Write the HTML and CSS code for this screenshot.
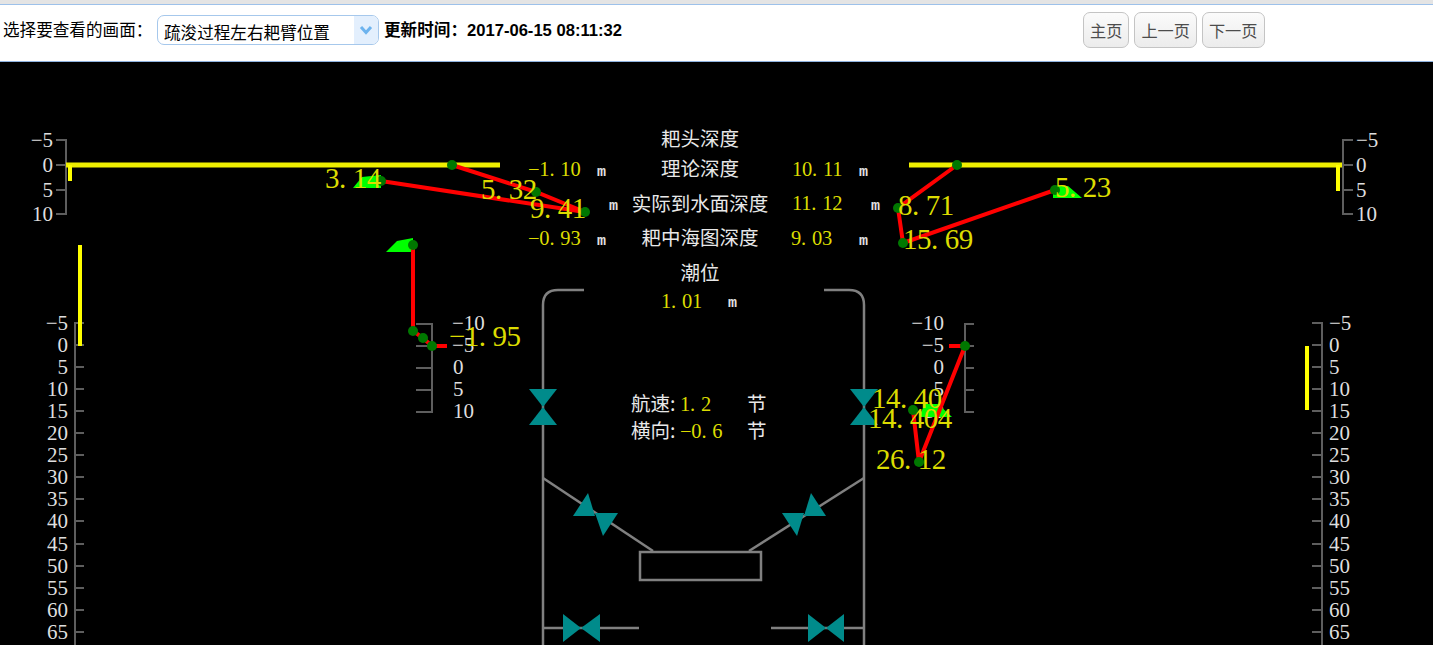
FILE: index.html
```html
<!DOCTYPE html>
<html lang="zh-CN">
<head>
    <meta charset="UTF-8">
    <title>疏浚过程左右耙臂位置</title>
    <link rel="stylesheet" href="styles.css">
</head>
<body>

<div class="topline"></div>

<div class="toolbar">
    <label class="pick-label" for="screen">选择要查看的画面<span class="colon">：</span></label>
    <div class="select-wrap">
        <select id="screen" class="screen-select">
            <option>疏浚过程左右耙臂位置</option>
        </select>
        <span class="select-arrow">
            <svg width="14" height="10" viewBox="0 0 14 10"><path d="M2 2 L7 7.5 L12 2" fill="none" stroke="#6db3ee" stroke-width="3"/></svg>
        </span>
    </div>
    <span class="update-time">更新时间<span class="colon">：</span>2017-06-15 08:11:32</span>
    <div class="pager">
        <button class="pager-btn" type="button">主页</button>
        <button class="pager-btn" type="button">上一页</button>
        <button class="pager-btn" type="button">下一页</button>
    </div>
</div>

<!-- viewBox keeps the screenshot's y values, canvas starts at y=62 -->
<svg class="canvas" viewBox="0 62 1433 583" width="1433" height="583">

    <!-- hull -->
    <g class="hull">
        <path d="M584 290 H558 Q543 290 543 305 V645"/>
        <path d="M824 290 H849 Q864 290 864 305 V645"/>
        <path d="M543 478 L653 551"/>
        <path d="M864 478 L749 551"/>
        <rect x="640" y="552" width="121" height="28"/>
        <path d="M543 628 H639"/>
        <path d="M771 628 H864"/>
    </g>

    <!-- valves -->
    <g class="valve">
        <polygon points="529,389 557,389 543,407"/>
        <polygon points="529,425 557,425 543,407"/>
        <polygon points="850,389 878,389 864,407"/>
        <polygon points="850,425 878,425 864,407"/>
        <polygon points="588,493 573,516 595,516"/>
        <polygon points="595,513 618,513 603,536"/>
        <polygon points="811,493 804,516 826,516"/>
        <polygon points="782,513 804,513 797,536"/>
        <polygon points="563,614 563,642 581,628"/>
        <polygon points="600,614 600,642 581,628"/>
        <polygon points="808,614 808,642 826,628"/>
        <polygon points="844,614 844,642 826,628"/>
    </g>

    <!-- scales -->
    <g class="scale">
        <path d="M56 140 H66 V214 H56 M56 165 H66 M56 190 H66"/>
        <path d="M1353 140 H1343 V214 H1353 M1353 165 H1343 M1353 190 H1343"/>
        <path d="M416 324 H432 V412 H416 M416 346 H432 M416 368 H432 M416 390 H432"/>
        <path d="M974 324 H965 V412 H974 M974 346 H965 M974 368 H965 M974 390 H965"/>
        <path d="M84 323 H75 V645 M84 345 H75 M84 367 H75 M84 389 H75 M84 411 H75 M84 433 H75 M84 455 H75 M84 477 H75 M84 499 H75 M84 521 H75 M84 544 H75 M84 566 H75 M84 588 H75 M84 610 H75 M84 632 H75"/>
        <path d="M1312 323 H1322 V645 M1312 345 H1322 M1312 367 H1322 M1312 389 H1322 M1312 411 H1322 M1312 433 H1322 M1312 455 H1322 M1312 477 H1322 M1312 499 H1322 M1312 521 H1322 M1312 544 H1322 M1312 566 H1322 M1312 588 H1322 M1312 610 H1322 M1312 632 H1322"/>
    </g>

    <g class="tick-label end">
        <text x="53" y="147">−5</text>
        <text x="53" y="172">0</text>
        <text x="53" y="197">5</text>
        <text x="53" y="221">10</text>

        <text x="68" y="330">−5</text>
        <text x="68" y="352">0</text>
        <text x="68" y="374">5</text>
        <text x="68" y="396">10</text>
        <text x="68" y="418">15</text>
        <text x="68" y="440">20</text>
        <text x="68" y="462">25</text>
        <text x="68" y="484">30</text>
        <text x="68" y="506">35</text>
        <text x="68" y="528">40</text>
        <text x="68" y="551">45</text>
        <text x="68" y="573">50</text>
        <text x="68" y="595">55</text>
        <text x="68" y="617">60</text>
        <text x="68" y="639">65</text>

        <text x="944" y="330">−10</text>
        <text x="944" y="352">−5</text>
        <text x="944" y="374">0</text>
        <text x="944" y="396">5</text>
        <text x="944" y="418">10</text>
    </g>
    <g class="tick-label">
        <text x="1356" y="147">−5</text>
        <text x="1356" y="172">0</text>
        <text x="1356" y="197">5</text>
        <text x="1356" y="221">10</text>

        <text x="452" y="330">−10</text>
        <text x="452" y="352">−5</text>
        <text x="453" y="374">0</text>
        <text x="453" y="396">5</text>
        <text x="453" y="418">10</text>

        <text x="1329" y="330">−5</text>
        <text x="1329" y="352">0</text>
        <text x="1329" y="374">5</text>
        <text x="1329" y="396">10</text>
        <text x="1329" y="418">15</text>
        <text x="1329" y="440">20</text>
        <text x="1329" y="462">25</text>
        <text x="1329" y="484">30</text>
        <text x="1329" y="506">35</text>
        <text x="1329" y="528">40</text>
        <text x="1329" y="551">45</text>
        <text x="1329" y="573">50</text>
        <text x="1329" y="595">55</text>
        <text x="1329" y="617">60</text>
        <text x="1329" y="639">65</text>
    </g>

    <!-- water line and draught bars -->
    <g class="level">
        <path class="water" d="M66 165 H500"/>
        <path d="M70 165 V181"/>
        <path class="water" d="M909 165 H1342"/>
        <path d="M1338 165 V191"/>
        <path d="M80 245 V346"/>
        <path d="M1307 346 V410"/>
    </g>

    <!-- drag heads -->
    <g class="head">
        <polygon points="353,188 362,177 381,175 381,188"/>
        <polygon points="386,252 397,241 413,238 413,252"/>
        <polygon points="1053,198 1053,186 1068,186 1082,198"/>
        <polygon points="920,417 920,414 925,404 938,404 952,417"/>
    </g>

    <!-- drag arms -->
    <g class="arm">
        <polyline points="452,165 536,192 585,212 381,181"/>
        <polyline points="413,245 413,331 423,338 432,346 447,346"/>
        <polyline points="957,165 898,208 903,243 1055,190"/>
        <polyline points="949,346 965,346 919,462 913,410"/>
    </g>
    <g class="joint">
        <circle cx="452" cy="165" r="5"/>
        <circle cx="536" cy="192" r="5"/>
        <circle cx="585" cy="212" r="5"/>
        <circle cx="381" cy="181" r="5"/>
        <circle cx="413" cy="245" r="5"/>
        <circle cx="413" cy="331" r="5"/>
        <circle cx="423" cy="338" r="5"/>
        <circle cx="432" cy="346" r="5"/>
        <circle cx="957" cy="165" r="5"/>
        <circle cx="898" cy="208" r="5"/>
        <circle cx="903" cy="243" r="5"/>
        <circle cx="1055" cy="190" r="5"/>
        <circle cx="965" cy="346" r="5"/>
        <circle cx="919" cy="462" r="5"/>
        <circle cx="913" cy="410" r="5"/>
    </g>

    <!-- depth table -->
    <g class="cn-label middle">
        <text x="700" y="146">耙头深度</text>
        <text x="700" y="176">理论深度</text>
        <text x="700" y="211">实际到水面深度</text>
        <text x="700" y="245">耙中海图深度</text>
        <text x="700" y="280">潮位</text>
    </g>
    <g class="small-value">
        <text x="528" y="176">−1.<tspan dx="6">10</tspan></text>
        <text x="528" y="245">−0.<tspan dx="6">93</tspan></text>
        <text x="792" y="176">10.<tspan dx="6">11</tspan></text>
        <text x="792" y="210">11.<tspan dx="6">12</tspan></text>
        <text x="791" y="245">9.<tspan dx="6">03</tspan></text>
        <text x="661" y="308">1.<tspan dx="6">01</tspan></text>
    </g>
    <g class="unit">
        <text x="597" y="176">m</text>
        <text x="609" y="210">m</text>
        <text x="597" y="245">m</text>
        <text x="859" y="176">m</text>
        <text x="871" y="210">m</text>
        <text x="859" y="245">m</text>
        <text x="728" y="307">m</text>
    </g>

    <!-- speed -->
    <g class="cn-label">
        <text x="631" y="411">航速:</text>
        <text x="631" y="438">横向:</text>
        <text x="747" y="411">节</text>
        <text x="747" y="438">节</text>
    </g>
    <g class="small-value">
        <text x="680" y="411">1.<tspan dx="6">2</tspan></text>
        <text x="680" y="438">−0.<tspan dx="6">6</tspan></text>
    </g>

    <!-- arm readings -->
    <g class="big-value">
        <text x="325" y="188">3.<tspan dx="7">14</tspan></text>
        <text x="481" y="199">5.<tspan dx="7">32</tspan></text>
        <text x="530" y="218">9.<tspan dx="7">41</tspan></text>
        <text x="449" y="346">−1.<tspan dx="7">95</tspan></text>
        <text x="898" y="215">8.<tspan dx="7">71</tspan></text>
        <text x="903" y="249">15.<tspan dx="7">69</tspan></text>
        <text x="1055" y="197">5.<tspan dx="7">23</tspan></text>
        <text x="872" y="408">14.<tspan dx="7">40</tspan></text>
        <text x="868" y="428">14.<tspan dx="7">404</tspan></text>
        <text x="876" y="469">26.<tspan dx="7">12</tspan></text>
    </g>
</svg>

</body>
</html>
```

FILE: styles.css
```css
html, body {
    margin: 0;
    padding: 0;
    height: 100%;
    overflow: hidden;
    background: #000;
    font-family: "Liberation Sans", "Noto Sans CJK SC", sans-serif;
}

.topline {
    height: 4px;
    background: #e4e4e4;
    border-bottom: 1px solid #9dc1ea;
}

.toolbar {
    display: flex;
    align-items: flex-start;
    height: 56px;
    background: #fff;
    border-bottom: 1px solid #8fb3e0;
    color: #000;
    font-size: 16.6px;
}

/* centred full-width colon, the SC face sets it in the corner */
.colon {
    font-family: "Noto Sans CJK TC", sans-serif;
}

.pick-label {
    margin: 14px 0 0 3px;
    width: 154px;
    white-space: nowrap;
    line-height: 20px;
}

.select-wrap {
    position: relative;
    margin-top: 10px;
    width: 222px;
    height: 30px;
}

.screen-select {
    appearance: none;
    width: 100%;
    height: 100%;
    padding: 7px 0 0 6px;
    border: 1px solid #a6c8ec;
    border-radius: 7px;
    background: #fff;
    color: #000;
    font: 16.6px "Liberation Sans", "Noto Sans CJK SC", sans-serif;
}

.select-arrow {
    position: absolute;
    top: 1px;
    right: 1px;
    bottom: 1px;
    width: 24px;
    display: flex;
    align-items: center;
    justify-content: center;
    background: #e3effd;
    border-radius: 0 6px 6px 0;
}

.update-time {
    margin: 14px 0 0 5px;
    width: 238px;
    font-weight: bold;
    white-space: nowrap;
    line-height: 20px;
}

.pager {
    display: flex;
    gap: 5px;
    margin: 7px 0 0 461px;
}

.pager-btn {
    height: 36px;
    padding: 0 6px;
    border: 1px solid #c4c4c4;
    border-radius: 7px;
    background: linear-gradient(#fbfbfb, #ececec);
    color: #4c4c4c;
    font: 16.2px "Liberation Sans", "Noto Sans CJK SC", sans-serif;
}

.canvas {
    display: block;
    background: #000;
}

.hull path, .hull rect {
    fill: none;
    stroke: #808080;
    stroke-width: 2.5;
}

.valve polygon {
    fill: #008b8b;
}

.scale path {
    fill: none;
    stroke: #5e5e5e;
    stroke-width: 2;
}

.tick-label text {
    fill: #dedede;
    font: 21px "Liberation Serif", serif;
}

.end text {
    text-anchor: end;
}

.level path {
    fill: none;
    stroke: #ffff00;
    stroke-width: 4;
}

.level .water {
    stroke: #eeee00;
    stroke-width: 5;
}

.head polygon {
    fill: #00ff00;
}

.arm polyline {
    fill: none;
    stroke: #ff0000;
    stroke-width: 4;
}

.joint circle {
    fill: #007800;
}

.cn-label text {
    fill: #e8e8e8;
    font: 19.5px "Noto Sans CJK SC", sans-serif;
}

.middle text {
    text-anchor: middle;
}

.small-value text {
    fill: #dcdc00;
    font: 20.5px "Liberation Serif", serif;
    letter-spacing: -0.2px;
}

.unit text {
    fill: #e0e0e0;
    font: bold 15px "Liberation Mono", monospace;
}

.big-value text {
    fill: #dcdc00;
    font: 29px "Liberation Serif", serif;
    letter-spacing: -0.5px;
}
```
